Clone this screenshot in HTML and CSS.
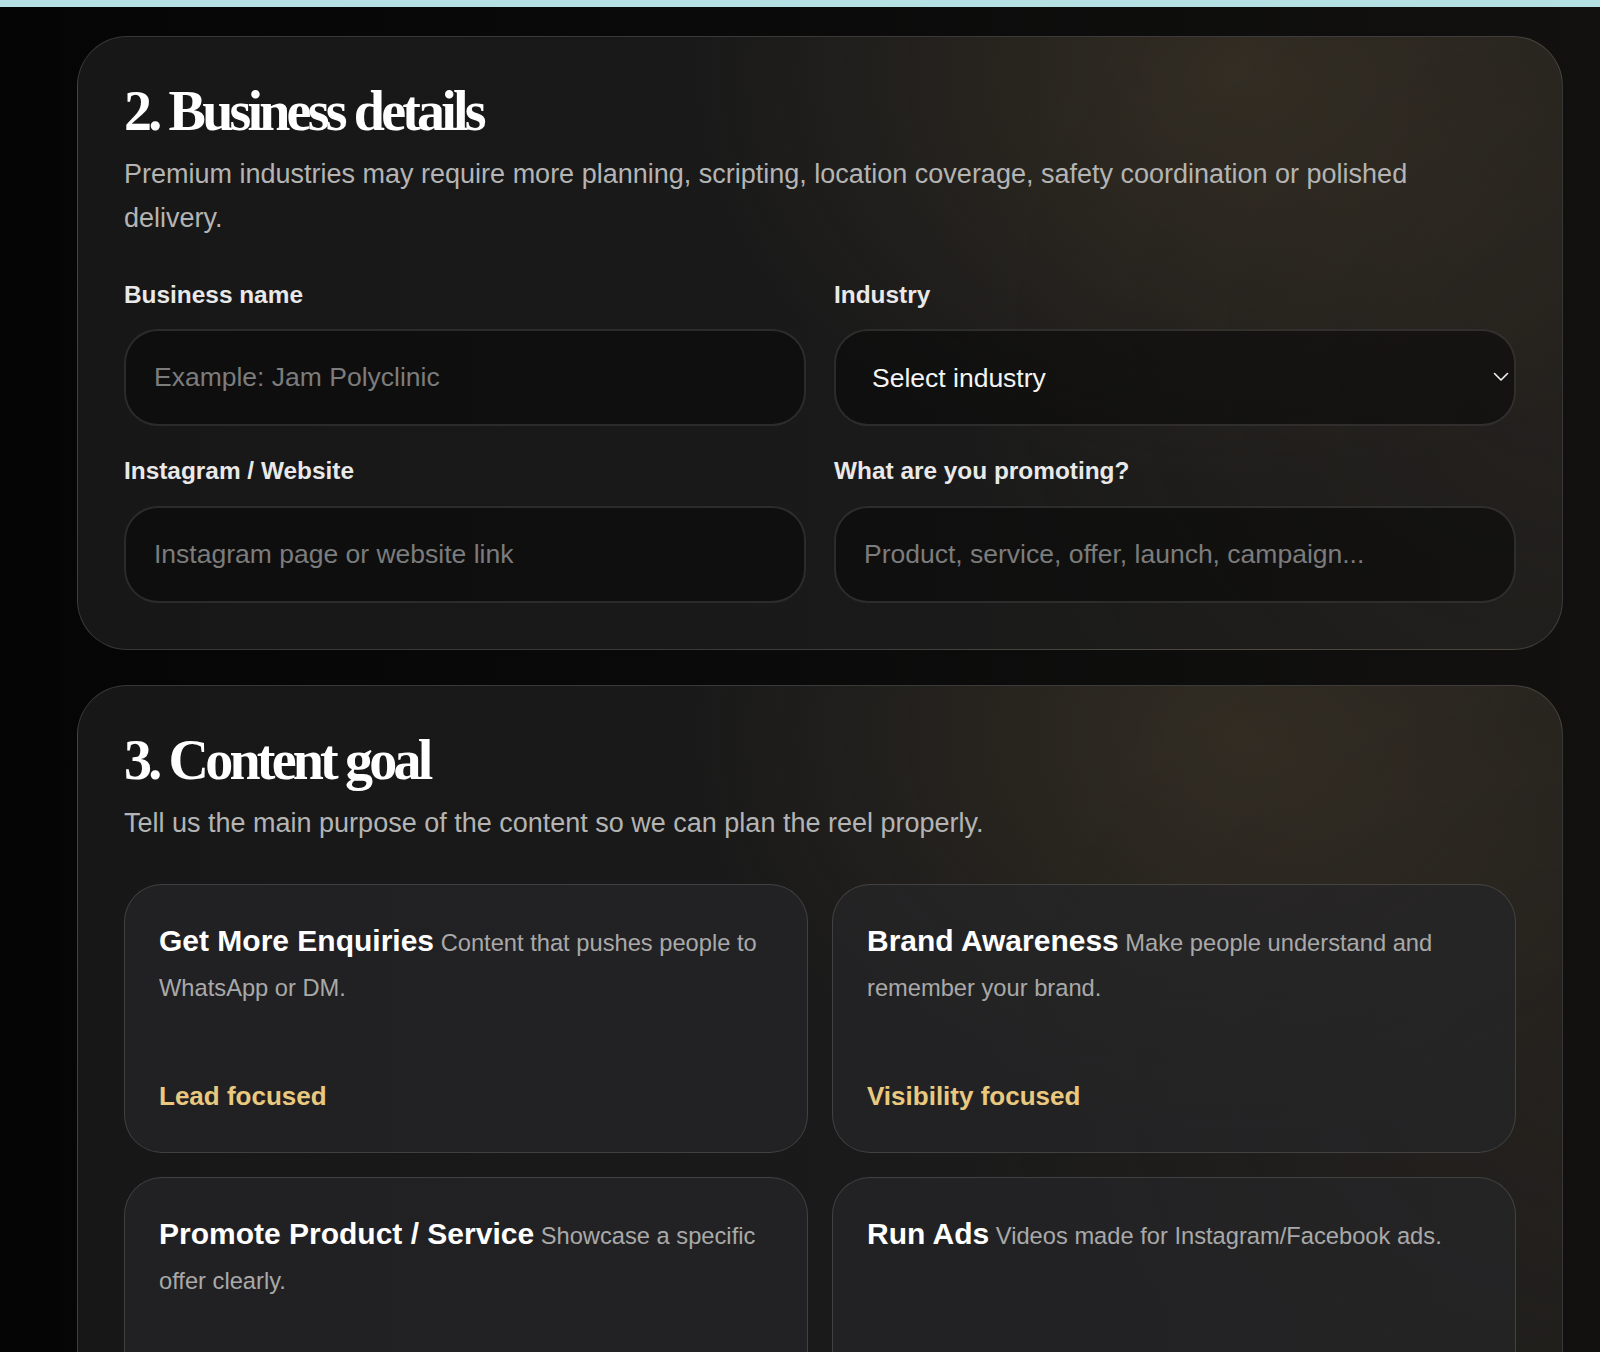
FILE: index.html
```html
<!DOCTYPE html>
<html lang="en">
<head>
<meta charset="utf-8">
<title>Business details</title>
<link rel="stylesheet" href="styles.css">
</head>
<body>
<div class="topbar"></div>
<main class="page">
  <section class="panel">
    <h2 class="panel-title">2. Business details</h2>
    <p class="panel-lead">Premium industries may require more planning, scripting, location coverage, safety coordination or polished delivery.</p>
    <div class="form-grid">
      <label class="field">
        <span class="field-label">Business name</span>
        <input class="field-input" type="text" placeholder="Example: Jam Polyclinic">
      </label>
      <label class="field">
        <span class="field-label">Industry</span>
        <span class="select-wrap">
          <select class="field-input field-select">
            <option>Select industry</option>
          </select>
          <svg class="select-chevron" width="16" height="10" viewBox="0 0 16 10" aria-hidden="true"><path d="M1.5 1.5 L8 8 L14.5 1.5" fill="none" stroke="#f2f2f2" stroke-width="1.6" stroke-linecap="round" stroke-linejoin="round"/></svg>
        </span>
      </label>
      <label class="field">
        <span class="field-label">Instagram / Website</span>
        <input class="field-input" type="text" placeholder="Instagram page or website link">
      </label>
      <label class="field">
        <span class="field-label">What are you promoting?</span>
        <input class="field-input" type="text" placeholder="Product, service, offer, launch, campaign...">
      </label>
    </div>
  </section>

  <section class="panel">
    <h2 class="panel-title">3. Content goal</h2>
    <p class="panel-lead">Tell us the main purpose of the content so we can plan the reel properly.</p>
    <div class="goal-grid">
      <div class="goal-card">
        <p class="goal-text"><strong class="goal-title">Get More Enquiries</strong> Content that pushes people to WhatsApp or DM.</p>
        <span class="goal-tag">Lead focused</span>
      </div>
      <div class="goal-card">
        <p class="goal-text"><strong class="goal-title">Brand Awareness</strong> Make people understand and remember your brand.</p>
        <span class="goal-tag">Visibility focused</span>
      </div>
      <div class="goal-card">
        <p class="goal-text"><strong class="goal-title">Promote Product / Service</strong> Showcase a specific offer clearly.</p>
      </div>
      <div class="goal-card">
        <p class="goal-text"><strong class="goal-title">Run Ads</strong> Videos made for Instagram/Facebook ads.</p>
      </div>
    </div>
  </section>
</main>
</body>
</html>
```

FILE: styles.css
```css
* {
  box-sizing: border-box;
}

html, body {
  margin: 0;
  padding: 0;
}

body {
  font-family: "Liberation Sans", Arial, sans-serif;
  color: #f2f2f2;
  background: linear-gradient(90deg, #050505 0%, #0a0a0a 45%, #121110 100%);
  min-height: 1352px;
}

.topbar {
  height: 7px;
  background: #b6e1e4;
}

.page {
  display: flex;
  flex-direction: column;
  gap: 35px;
  padding: 29px 37px 40px 77px;
}

.panel {
  border: 1px solid rgba(255, 255, 255, 0.14);
  border-radius: 50px;
  padding: 44px 46px 46px;
  background:
    radial-gradient(ellipse 700px 520px at 78% 6%, rgba(92, 76, 50, 0.34), rgba(92, 76, 50, 0) 78%),
    radial-gradient(ellipse 800px 700px at 100% 50%, rgba(60, 50, 38, 0.2), rgba(60, 50, 38, 0) 75%),
    linear-gradient(90deg, #171717 0%, #1a1a1a 55%, #1e1d1b 100%);
}

.panel-title {
  margin: 0;
  font-family: "Liberation Serif", "Times New Roman", serif;
  font-weight: 700;
  font-size: 56px;
  line-height: 61.6px;
  letter-spacing: -3.8px;
  color: #ffffff;
}

.panel-lead {
  margin: 9px 0 0;
  max-width: 1330px;
  font-size: 27px;
  line-height: 44px;
  color: #b4b4b4;
}

.form-grid {
  display: grid;
  grid-template-columns: 1fr 1fr;
  column-gap: 28px;
  row-gap: 31px;
  margin-top: 41px;
}

.field {
  display: flex;
  flex-direction: column;
  gap: 20px;
}

.field-label {
  font-size: 24.4px;
  line-height: 28.8px;
  font-weight: 700;
  color: #e9e9e9;
}

.field-input {
  width: 100%;
  height: 97px;
  border: 2px solid rgba(255, 255, 255, 0.12);
  border-radius: 34px;
  background: rgba(8, 8, 8, 0.55);
  padding: 0 28px;
  font-family: "Liberation Sans", Arial, sans-serif;
  font-size: 26.5px;
  color: #f2f2f2;
  outline: none;
}

.field-input::placeholder {
  color: #7c7c7c;
}

.select-wrap {
  position: relative;
  display: block;
}

.field-select {
  appearance: none;
  -webkit-appearance: none;
  padding-left: 36px;
  color: #f4f4f4;
}

.select-chevron {
  position: absolute;
  right: 7px;
  top: 43px;
}

.goal-grid {
  display: grid;
  grid-template-columns: 1fr 1fr;
  gap: 24px;
  margin-top: 39px;
}

.goal-card {
  display: flex;
  flex-direction: column;
  min-height: 269px;
  border: 1.5px solid rgba(255, 255, 255, 0.14);
  border-radius: 38px;
  padding: 36px 34px 41px;
  background: rgba(38, 38, 40, 0.72);
}

.goal-text {
  margin: 0;
  font-size: 23.7px;
  line-height: 45.6px;
  color: #a9a9a9;
}

.goal-title {
  font-size: 30px;
  line-height: 1;
  font-weight: 700;
  color: #ffffff;
}

.goal-tag {
  margin-top: auto;
  font-size: 26px;
  line-height: 28.8px;
  font-weight: 700;
  color: #e9c97f;
}
```
